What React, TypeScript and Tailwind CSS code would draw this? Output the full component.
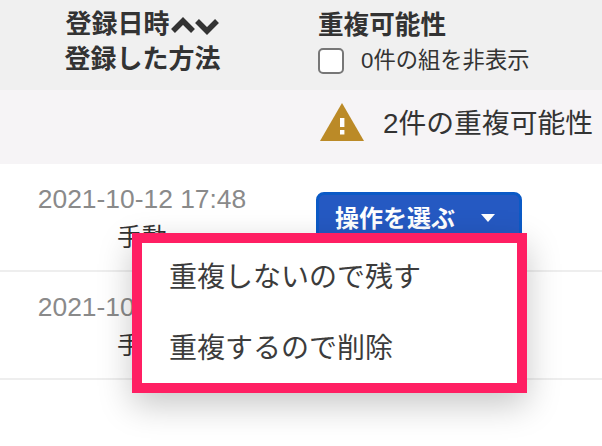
const FONT = "font-['Liberation_Sans','Noto_Sans_CJK_JP',sans-serif]";

const rows = [
  { date: "2021-10-12 17:48", method: "手動", action: true },
  { date: "2021-10-12 17:48", method: "手動", action: false },
];

function ActionButton() {
  return (
    <div className="flex h-[60px] w-[206px] items-start rounded-lg border-[3px] border-[#0b5ac6] bg-[#2559c2] pl-4 pr-4 pt-[8px] text-[24px] leading-[32px] font-bold text-white">
      <span>操作を選ぶ</span>
      <svg viewBox="0 0 14 8" className="mt-[11px] ml-[26px] h-[8px] w-[14px] fill-white">
        <path d="M0 0h14L7 8z" />
      </svg>
    </div>
  );
}

export default function App() {
  return (
    <div className={`relative h-[446px] w-[602px] overflow-hidden bg-white text-[#333] ${FONT}`}>
      {/* table header */}
      <div className="flex h-[90px] bg-[#f0f0f0]">
        <div className="flex w-[285px] flex-col items-center pt-[7px] font-bold text-[26px] leading-[35px]">
          <div className="flex items-center">
            登録日時
            <svg viewBox="0 0 48 20" fill="none" className="h-[20px] w-[50px] stroke-[#333] stroke-[5.5]">
              <path d="M2 16 12 6l10 10M26 6l10 10 10-10" />
            </svg>
          </div>
          <div>登録した方法</div>
        </div>
        <div className="pl-[33px] pt-[8px]">
          <div className="text-[25.6px] leading-[35px] font-bold">重複可能性</div>
          <label className="mt-[4px] flex items-center text-[22.3px] leading-[28px]">
            <span className="h-[26px] w-[26px] rounded-[5px] border-2 border-[#777] bg-white" />
            <span className="ml-[17px]">0件の組を非表示</span>
          </label>
        </div>
      </div>

      {/* summary */}
      <div className="flex h-[74px] items-start bg-[#f6f4f6] pl-[320px] pt-[13px]">
        <svg viewBox="0 0 44 38" className="h-[38px] w-[44px]">
          <path d="M22 0 44 38H0z" fill="#bb8a27" />
          <path d="M20 15h4.400v9H20zM20 27h4.400v4.500H20z" fill="#fff" />
        </svg>
        <div className="ml-[19px] mt-[2px] text-[27.8px] leading-[38px]">2件の重複可能性</div>
      </div>

      {/* rows */}
      {rows.map((row, i) => (
        <div key={i} className="flex h-[108px] border-b-2 border-[#eeeeee]">
          <div className="flex w-[284px] flex-col items-center pt-[18px] text-[26.4px] leading-[34px]">
            <div className="text-[#8a8a8a]">{row.date}</div>
            <div className="mt-[5px] text-[25px] leading-[32px]">{row.method}</div>
          </div>
          <div className="pl-[32px] pt-[28px]">{row.action && <ActionButton />}</div>
        </div>
      ))}

      {/* dropdown menu */}
      <div className="absolute left-[132px] top-[233px] flex h-[160px] w-[395px] flex-col border-[10px] border-[#ff1f63] bg-white pl-[27px] pt-[15px] text-[28px] leading-[40px] text-[#3c3c3c] shadow-[0_12px_32px_rgba(0,0,0,0.22)]">
        <div>重複しないので残す</div>
        <div className="mt-[31px]">重複するので削除</div>
      </div>
    </div>
  );
}
